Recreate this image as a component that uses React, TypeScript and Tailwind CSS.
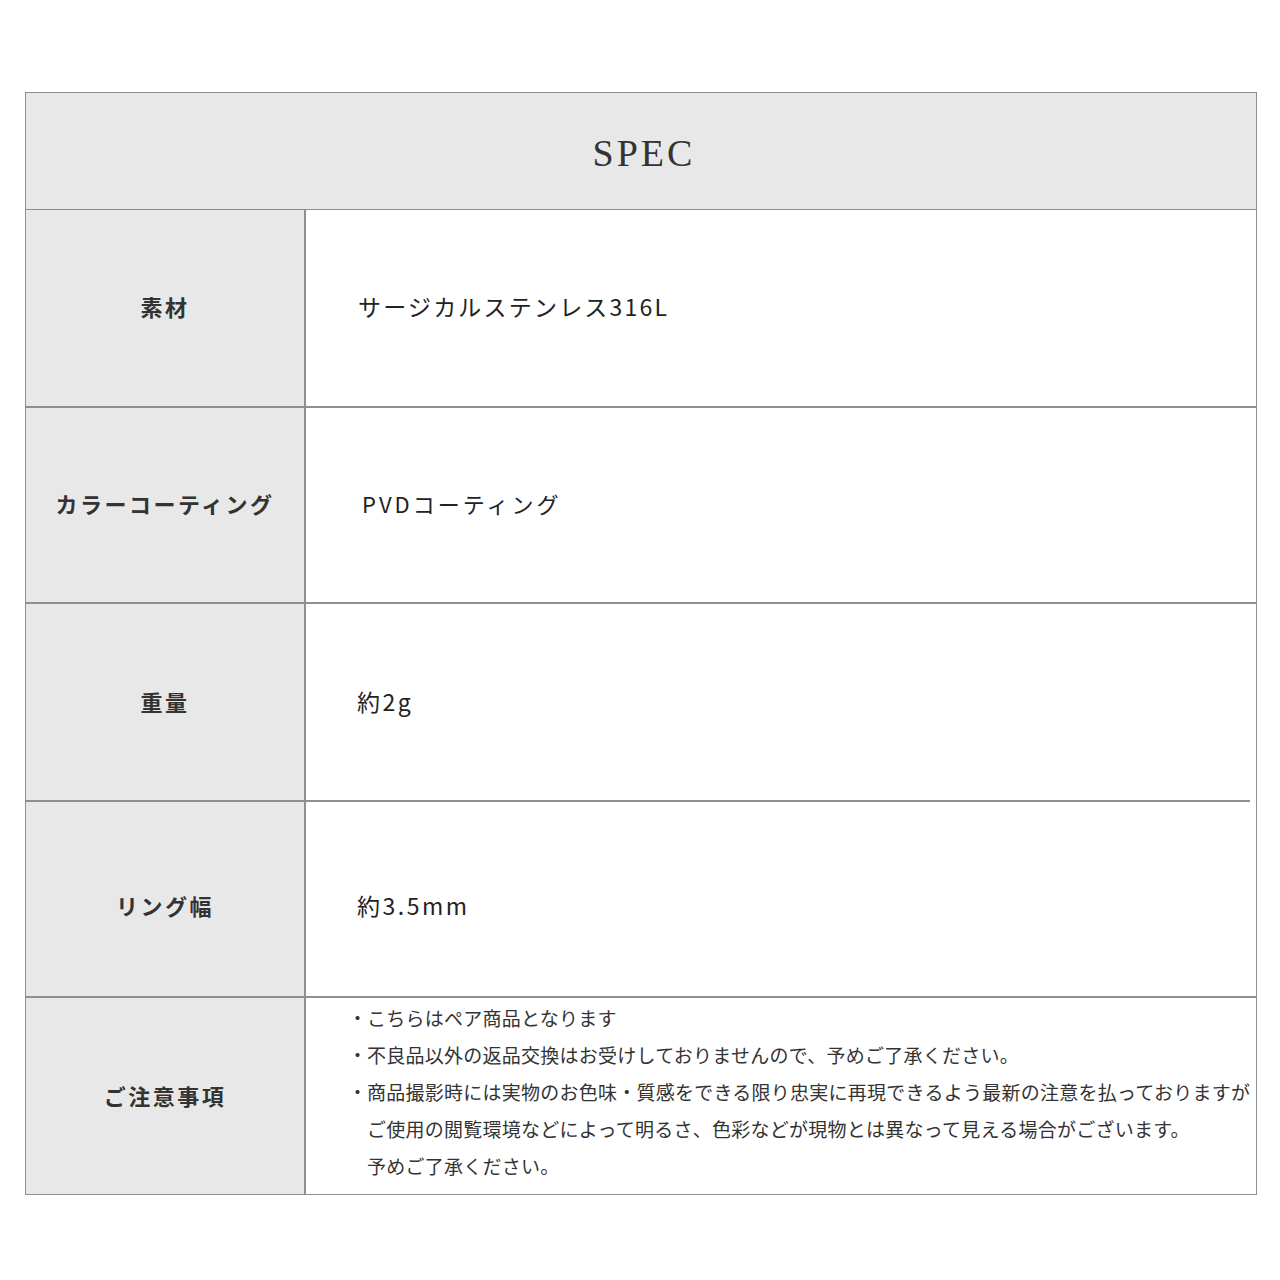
const jp = "font-['Noto_Sans_CJK_JP',sans-serif]";

type Row = {
  label: string;
  value: string;
  valueClass: string;
  height: string;
  lineShort?: boolean;
  offset?: string;
};

const rows: Row[] = [
  { label: "素材", value: "サージカルステンレス316L", valueClass: "pl-[52px] text-[23px] tracking-[2.2px]", height: "h-[198px]", offset: "pb-[4px]" },
  { label: "カラーコーティング", value: "PVDコーティング", valueClass: "pl-[56px] text-[22px] tracking-[3px]", height: "h-[196px]", offset: "pb-[4px]" },
  { label: "重量", value: "約2g", valueClass: "pl-[51px] text-[23px] tracking-[2.5px]", height: "h-[198px]", lineShort: true, offset: "pb-[2px]" },
  { label: "リング幅", value: "約3.5mm", valueClass: "pl-[51px] text-[23px] tracking-[2.5px]", height: "h-[196px]", offset: "pt-[12px]" },
];

const notes = [
  { bullet: true, text: "こちらはペア商品となります" },
  { bullet: true, text: "不良品以外の返品交換はお受けしておりませんので、予めご了承ください。" },
  { bullet: true, text: "商品撮影時には実物のお色味・質感をできる限り忠実に再現できるよう最新の注意を払っておりますが" },
  { bullet: false, text: "ご使用の閲覧環境などによって明るさ、色彩などが現物とは異なって見える場合がございます。" },
  { bullet: false, text: "予めご了承ください。" },
];

export default function App() {
  return (
    <div className="w-[1280px] h-[1280px] bg-white pt-[92px] pl-[25px]">
      <div className="w-[1232px] border border-[#8f8f8f]">
        {/* header */}
        <div className="h-[117px] bg-[#e8e8e8] border-b border-[#8f8f8f] flex items-center justify-center pt-[4px] pl-[6px]">
          <span className="font-['Liberation_Serif',serif] text-[38px] tracking-[3px] text-[#333]">SPEC</span>
        </div>

        {rows.map((r) => (
          <div key={r.label} className={`flex ${r.height}`}>
            <div
              className={`w-[280px] shrink-0 bg-[#e8e8e8] border-r-2 border-b-2 border-[#8f8f8f] flex items-center justify-center ${r.offset ?? ""}`}
            >
              <span className={`${jp} font-bold text-[22px] tracking-[2.5px] text-[#333]`}>{r.label}</span>
            </div>
            <div className={`flex-1 ${r.lineShort ? "mr-[6px]" : ""} border-b-2 border-[#8f8f8f] flex items-center ${r.offset ?? ""}`}>
              <span className={`${jp} ${r.valueClass} text-[#222]`}>{r.value}</span>
            </div>
          </div>
        ))}

        {/* notes */}
        <div className="flex h-[196px]">
          <div className="w-[280px] shrink-0 bg-[#e8e8e8] border-r-2 border-[#8f8f8f] flex items-center justify-center pb-[2px]">
            <span className={`${jp} font-bold text-[22px] tracking-[2.5px] text-[#333]`}>ご注意事項</span>
          </div>
          <div className={`flex-1 pt-[1px] pl-[42px] ${jp} text-[19px] leading-[37px] tracking-[0.25px] text-[#333]`}>
            {notes.map((n, i) => (
              <div key={i} className="flex whitespace-nowrap">
                <span className="w-[19px] shrink-0">{n.bullet ? "・" : ""}</span>
                <span>{n.text}</span>
              </div>
            ))}
          </div>
        </div>
      </div>
    </div>
  );
}
